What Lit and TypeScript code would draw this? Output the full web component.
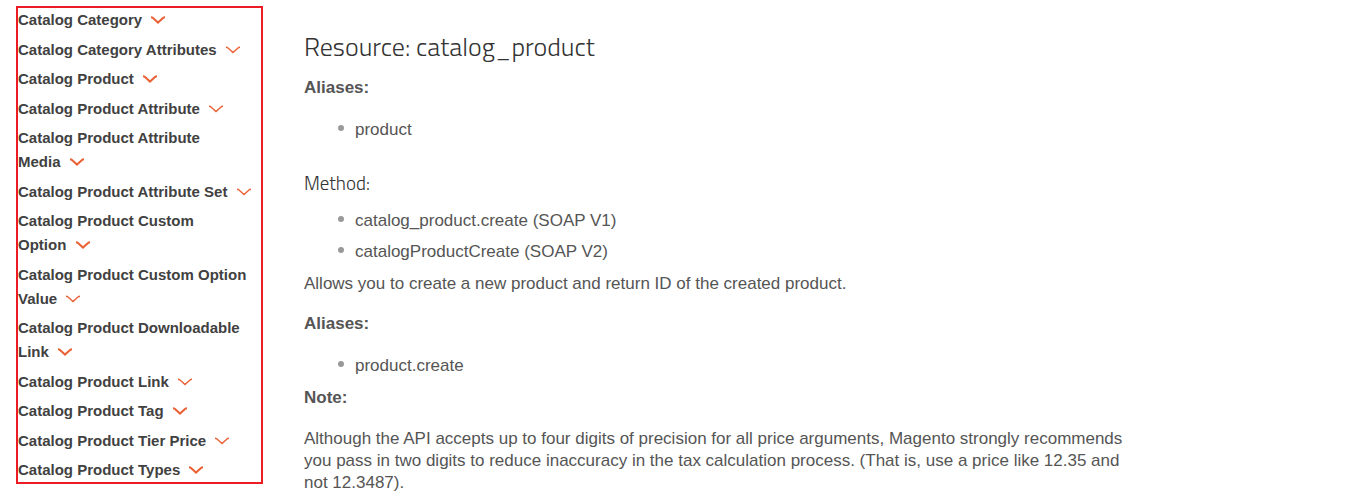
import { LitElement, html, css } from "lit";
import { customElement } from "lit/decorators.js";

const sections = [
  "Catalog Category",
  "Catalog Category Attributes",
  "Catalog Product",
  "Catalog Product Attribute",
  "Catalog Product Attribute Media",
  "Catalog Product Attribute Set",
  "Catalog Product Custom Option",
  "Catalog Product Custom Option Value",
  "Catalog Product Downloadable Link",
  "Catalog Product Link",
  "Catalog Product Tag",
  "Catalog Product Tier Price",
  "Catalog Product Types",
];

@customElement("api-nav")
export class ApiNav extends LitElement {
  static styles = css`
    :host {
      display: block;
      box-sizing: border-box;
      border: 2px solid #ed1c24;
      font: bold 15px/24px "Liberation Sans", Arial, sans-serif;
    }
    .list {
      list-style: none;
      margin: 0;
      padding: 0;
    }
    .item + .item {
      margin-top: 5px;
    }
    .item:nth-child(even) {
      margin-top: 6px;
    }
    .link {
      display: block;
      color: #414141;
      text-decoration: none;
    }
    .tail {
      white-space: nowrap;
    }
    .chevron {
      width: 16px;
      height: 9px;
      margin-left: 4px;
      fill: none;
      stroke: #eb6136;
      stroke-width: 2;
    }
    .item:nth-child(even) .chevron {
      stroke-width: 1.4;
    }
  `;

  // The chevron stays on the same line as the last word of the name.
  private renderItem(name: string) {
    const cut = name.lastIndexOf(" ") + 1;
    return html`<li class="item">
      <a class="link" href="#">${name.slice(0, cut)}<span class="tail">${name.slice(cut)} <svg class="chevron" viewBox="0 0 16 9" aria-hidden="true"><path d="M1 1.3 Q2.2 1.3 3 2 L8 6.6 L13 2 Q13.8 1.3 15 1.3" /></svg></span></a>
    </li>`;
  }

  render() {
    return html`<nav aria-label="Resources">
      <ul class="list">
        ${sections.map((name) => this.renderItem(name))}
      </ul>
    </nav>`;
  }
}

@customElement("app-root")
export class AppRoot extends LitElement {
  static styles = css`
    :host {
      display: grid;
      grid-template-columns: 247px minmax(0, 828px);
      column-gap: 41px;
      align-items: start;
      padding: 6px 16px 0;
      background: #fff;
      color: #555;
      font: 17px/22px "Liberation Sans", Arial, sans-serif;
    }
    .title,
    .subtitle {
      font-family: "Titillium Web", "Open Sans", sans-serif;
      font-weight: 300;
      color: #333;
    }
    .title {
      margin: 25px 0 14px;
      font-size: 26px;
      line-height: 32px;
    }
    .subtitle {
      margin: 30px 0 15px;
      font-size: 19px;
      line-height: 24px;
    }
    .text {
      margin: 0;
    }
    .label {
      margin: 18px 0 20px;
      font-weight: bold;
    }
    .title + .label {
      margin-top: 0;
    }
    .list + .label {
      margin: 10px 0 19px;
    }
    .list {
      display: grid;
      row-gap: 9px;
      list-style: none;
      margin: 0;
      padding: 0 0 0 34px;
    }
    .list + .text {
      margin-top: 10px;
    }
    .entry {
      display: flex;
      gap: 11px;
    }
    .entry::before {
      content: "";
      width: 6px;
      height: 6px;
      margin-top: 6px;
      border-radius: 50%;
      background: #999;
    }
  `;

  render() {
    return html`
      <api-nav></api-nav>
      <main>
        <h1 class="title">Resource: catalog_product</h1>
        <p class="label">Aliases:</p>
        <ul class="list">
          <li class="entry">product</li>
        </ul>
        <h2 class="subtitle">Method:</h2>
        <ul class="list">
          <li class="entry">catalog_product.create (SOAP V1)</li>
          <li class="entry">catalogProductCreate (SOAP V2)</li>
        </ul>
        <p class="text">Allows you to create a new product and return ID of the created product.</p>
        <p class="label">Aliases:</p>
        <ul class="list">
          <li class="entry">product.create</li>
        </ul>
        <p class="label">Note:</p>
        <p class="text">
          Although the API accepts up to four digits of precision for all price arguments, Magento strongly recommends
          you pass in two digits to reduce inaccuracy in the tax calculation process. (That is, use a price like 12.35
          and not 12.3487).
        </p>
      </main>
    `;
  }
}
